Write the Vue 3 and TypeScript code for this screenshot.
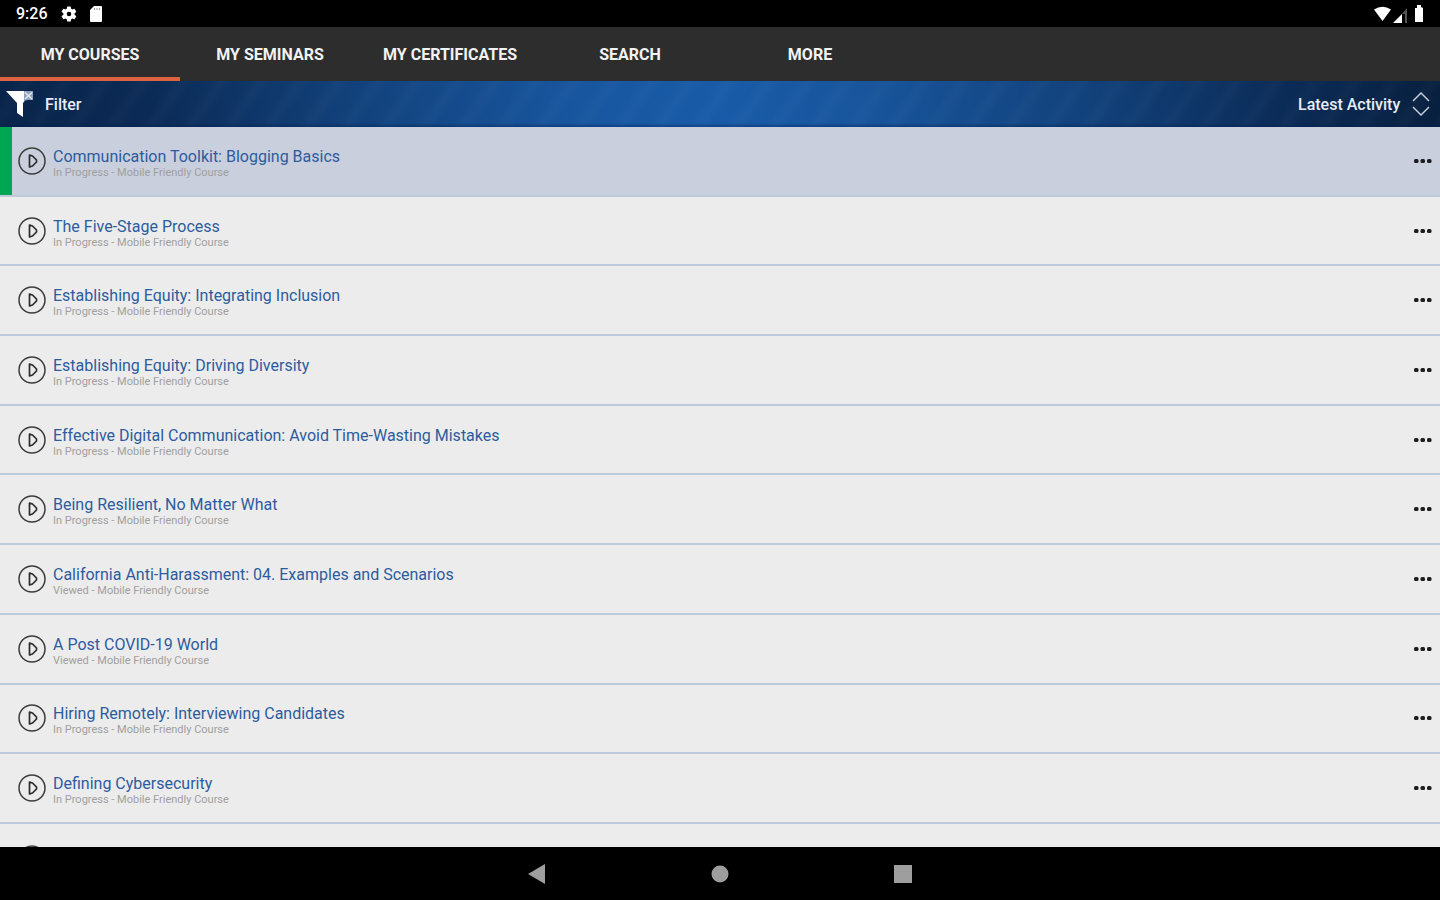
<script setup lang="ts">
import { ref } from 'vue'

interface Course {
  title: string
  status: string
}

const tabs: string[] = ['MY COURSES', 'MY SEMINARS', 'MY CERTIFICATES', 'SEARCH', 'MORE']
const activeTab = ref(0)
const selected = ref(0)
const sort = ref('Latest Activity')

const inProgress = 'In Progress - Mobile Friendly Course'
const viewed = 'Viewed - Mobile Friendly Course'

const courses: Course[] = [
  { title: 'Communication Toolkit: Blogging Basics', status: inProgress },
  { title: 'The Five-Stage Process', status: inProgress },
  { title: 'Establishing Equity: Integrating Inclusion', status: inProgress },
  { title: 'Establishing Equity: Driving Diversity', status: inProgress },
  { title: 'Effective Digital Communication: Avoid Time-Wasting Mistakes', status: inProgress },
  { title: 'Being Resilient, No Matter What', status: inProgress },
  { title: 'California Anti-Harassment: 04. Examples and Scenarios', status: viewed },
  { title: 'A Post COVID-19 World', status: viewed },
  { title: 'Hiring Remotely: Interviewing Candidates', status: inProgress },
  { title: 'Defining Cybersecurity', status: inProgress },
]
</script>

<template>
  <div class="screen">
    <header class="status-bar">
      <span class="clock">9:26</span>
      <svg class="gear" width="18" height="18" viewBox="0 0 24 24" aria-hidden="true">
        <path fill="#fff" fill-rule="evenodd" d="M19.4 13a7.500 7.500 0 0 0 0-2l2.100-1.600a.5.5 0 0 0 .1-.7l-2-3.400a.5.5 0 0 0-.6-.2l-2.500 1a7.300 7.300 0 0 0-1.700-1l-.4-2.600a.5.500 0 0 0-.5-.5h-4a.5.500 0 0 0-.5.500L9 5.100a7.300 7.300 0 0 0-1.700 1l-2.500-1a.5.500 0 0 0-.6.200l-2 3.400a.5.500 0 0 0 .1.700L4.500 11a7.500 7.500 0 0 0 0 2l-2.200 1.600a.5.500 0 0 0-.1.700l2 3.400c.1.200.4.300.6.200l2.500-1a7.300 7.300 0 0 0 1.700 1l.4 2.600c0 .3.200.5.500.5h4c.3 0 .5-.2.500-.5l.4-2.600a7.300 7.300 0 0 0 1.700-1l2.500 1c.2.100.5 0 .6-.2l2-3.400a.5.500 0 0 0-.1-.7zM12 15a3 3 0 1 1 0-6 3 3 0 0 1 0 6z" />
      </svg>
      <svg class="card" width="12" height="16" viewBox="0 0 12 16" aria-hidden="true">
        <path fill="#fff" d="M4 0h7a1 1 0 0 1 1 1v14a1 1 0 0 1-1 1H1a1 1 0 0 1-1-1V4z" />
        <path stroke="#999" d="M4.500 2v2M7 2v2M9.500 2v2" />
      </svg>
      <span class="spacer"></span>
      <svg width="52" height="18" viewBox="0 0 52 18" aria-hidden="true">
        <path fill="#fff" d="M0 4.500Q8.500-1 17 4.500L8.500 16z" />
        <path fill="#fff" d="M19 18 28 9v9z" />
        <path fill="#555" d="M28 9l5-6v15h-2V9z" />
        <path fill="#fff" d="M41 3h2V0h4v2l2 1v14h-8z" />
      </svg>
    </header>

    <nav class="tabs">
      <button
        v-for="(tab, i) in tabs"
        :key="tab"
        type="button"
        class="tab"
        :class="{ active: i === activeTab }"
        @click="activeTab = i"
      >{{ tab }}</button>
    </nav>

    <div class="toolbar">
      <button type="button" class="filter">
        <svg width="28" height="28" viewBox="0 0 28 28" aria-hidden="true">
          <path fill="#fff" d="M0 1h20v8l-3 4v14l-6-4V13z" />
          <path fill="#8fa0b8" d="M18 1h9v9h-6l-3 1z" />
          <path fill="none" stroke="#e4e9f0" stroke-width="1.500" d="M19 2.500 26 9M26 2.500 19 9" />
        </svg>
        <span>Filter</span>
      </button>
      <label class="sort">
        <select v-model="sort" aria-label="Sort order">
          <option>Latest Activity</option>
        </select>
        <svg width="18" height="24" viewBox="0 0 18 24" aria-hidden="true">
          <path fill="none" stroke="#c3ccd9" stroke-width="1.500" d="M1 9 9 1l8 8M1 15l8 8 8-8" />
        </svg>
      </label>
    </div>

    <ul class="list">
      <li
        v-for="(course, i) in courses"
        :key="course.title"
        class="row"
        :class="{ selected: i === selected }"
        @click="selected = i"
      >
        <button type="button" class="play" :aria-label="'Play ' + course.title">
          <svg width="28" height="28" viewBox="0 0 28 28" aria-hidden="true">
            <circle cx="14" cy="14" r="13" fill="none" stroke="#3c3c3c" stroke-width="1.500" />
            <path fill="none" stroke="#2c2c2c" stroke-width="1.700" stroke-linejoin="round" d="M11.500 8v12l3-1 4-4v-2l-4-4z" />
          </svg>
        </button>
        <div class="text">
          <a href="#" class="title" @click.prevent>{{ course.title }}</a>
          <span class="status">{{ course.status }}</span>
        </div>
        <button type="button" class="more" :aria-label="'Options for ' + course.title">
          <svg width="18" height="6" viewBox="0 0 18 6" aria-hidden="true">
            <g fill="#1d1d1d">
              <rect x="0" y="1" width="4.500" height="4" rx="1.500" />
              <rect x="6.500" y="1" width="4.500" height="4" rx="1.500" />
              <rect x="13" y="1" width="4.500" height="4" rx="1.500" />
            </g>
          </svg>
        </button>
      </li>
      <li class="row next">
        <svg class="peek" width="28" height="28" viewBox="0 0 28 28" aria-hidden="true">
          <circle cx="14" cy="14" r="13" fill="none" stroke="#3c3c3c" stroke-width="1.500" />
        </svg>
      </li>
    </ul>

    <footer class="nav-bar">
      <button type="button" aria-label="Back">
        <svg width="20" height="20" viewBox="0 0 20 20" aria-hidden="true"><path fill="#9e9e9e" d="M18 0v20L1 10z" /></svg>
      </button>
      <button type="button" aria-label="Home">
        <svg width="20" height="20" viewBox="0 0 20 20" aria-hidden="true"><circle cx="10" cy="10" r="8.500" fill="#9e9e9e" /></svg>
      </button>
      <button type="button" aria-label="Recent apps">
        <svg width="20" height="20" viewBox="0 0 20 20" aria-hidden="true"><path fill="#9e9e9e" d="M1 1h18v18H1z" /></svg>
      </button>
    </footer>
  </div>
</template>

<style>
body {
  margin: 0;
  background: #000;
}
</style>

<style scoped>
.screen {
  display: flex;
  flex-direction: column;
  height: 100vh;
  overflow: hidden;
  font-family: Roboto, "Liberation Sans", sans-serif;
  background: #000;
}

button {
  margin: 0;
  padding: 0;
  border: 0;
  background: none;
  font: inherit;
  color: inherit;
  cursor: pointer;
}

svg {
  display: block;
  flex: none;
}

.status-bar {
  display: flex;
  flex: none;
  align-items: center;
  height: 27px;
  padding: 0 14px 0 16px;
  color: #fff;
}

.clock {
  font-size: 16px;
  font-weight: 500;
}

.gear {
  margin-left: 12px;
}

.card {
  margin-left: 12px;
}

.spacer {
  flex: 1;
}

.tabs {
  display: flex;
  flex: none;
  height: 54px;
  background: #2d2d2d;
}

.tab {
  flex: 0 0 180px;
  border-top: 4px solid transparent;
  border-bottom: 4px solid transparent;
  color: #f2f2f2;
  font-size: 16px;
  font-weight: 700;
  white-space: nowrap;
}

.tab.active {
  border-bottom-color: #e0623f;
}

.toolbar {
  display: flex;
  flex: none;
  align-items: center;
  justify-content: space-between;
  height: 46px;
  padding: 0 10px 0 6px;
  color: #e8edf4;
  font-size: 16px;
  font-weight: 500;
  background:
    linear-gradient(to top, rgba(0, 30, 80, 0.4), transparent 4px),
    repeating-linear-gradient(125deg, rgba(255, 255, 255, 0) 0 12px, rgba(255, 255, 255, 0.02) 20px 24px, rgba(255, 255, 255, 0) 32px),
    linear-gradient(to right, #08244a 0%, #0b2a55 10%, #12427c 25%, #18569f 40%, #195ba8 50%, #18559c 60%, #12427c 75%, #0b2a55 90%, #08203f 100%);
}

.filter {
  display: flex;
  align-items: center;
  gap: 11px;
}

.sort {
  display: flex;
  align-items: center;
  gap: 11px;
}

.sort select {
  appearance: none;
  margin: 0;
  padding: 0;
  border: 0;
  background: none;
  color: inherit;
  font: inherit;
}

.list {
  display: grid;
  flex: 1;
  grid-template-rows: repeat(10, minmax(0, 1fr)) 23px;
  min-height: 0;
  margin: 0;
  padding: 0;
  overflow: hidden;
  list-style: none;
}

.row {
  display: flex;
  align-items: center;
  min-height: 0;
  padding: 0 8px 0 18px;
  border-bottom: 2px solid #bccad9;
  background: #ececec;
}

.row.selected {
  background: #c9cfdc;
  box-shadow: inset 12px 0 #00a651;
}

.row.next {
  align-items: flex-start;
  border-bottom: 0;
  overflow: hidden;
}

.peek {
  margin-top: 21px;
}

.text {
  display: flex;
  flex: 1;
  flex-direction: column;
  min-width: 0;
  margin-left: 7px;
  padding-top: 4px;
}

.title {
  color: #2c5c9e;
  font-size: 16px;
  line-height: 20px;
  text-decoration: none;
}

.status {
  color: #a0a0a0;
  font-size: 11px;
  line-height: 12px;
}

.nav-bar {
  display: flex;
  flex: none;
  align-items: center;
  justify-content: center;
  gap: 163px;
  height: 53px;
}
</style>
